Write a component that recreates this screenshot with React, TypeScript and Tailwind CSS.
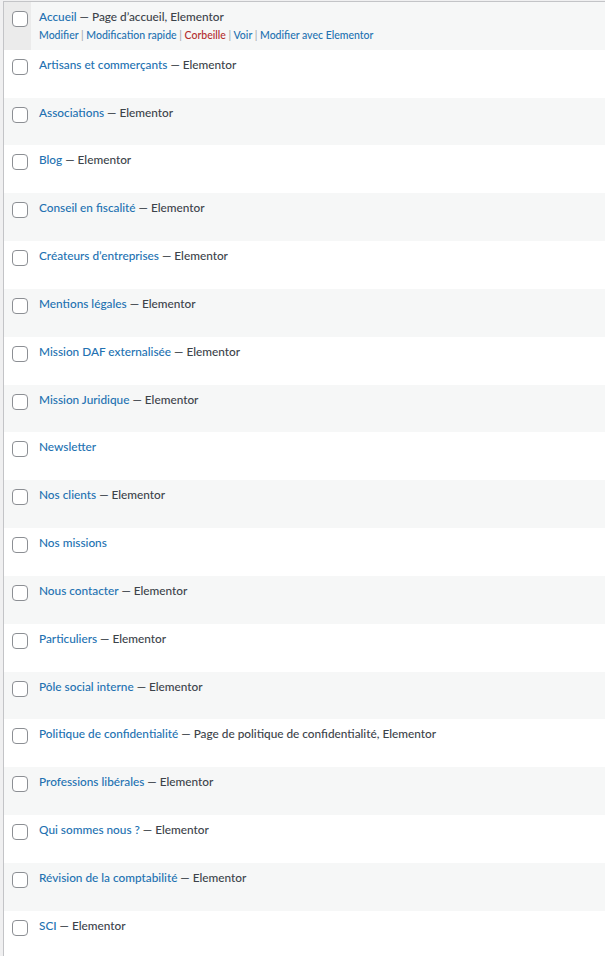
const pages: { title: string; state?: string }[] = [
  { title: "Accueil", state: "Page d’accueil, Elementor" },
  { title: "Artisans et commerçants", state: "Elementor" },
  { title: "Associations", state: "Elementor" },
  { title: "Blog", state: "Elementor" },
  { title: "Conseil en fiscalité", state: "Elementor" },
  { title: "Créateurs d’entreprises", state: "Elementor" },
  { title: "Mentions légales", state: "Elementor" },
  { title: "Mission DAF externalisée", state: "Elementor" },
  { title: "Mission Juridique", state: "Elementor" },
  { title: "Newsletter" },
  { title: "Nos clients", state: "Elementor" },
  { title: "Nos missions" },
  { title: "Nous contacter", state: "Elementor" },
  { title: "Particuliers", state: "Elementor" },
  { title: "Pôle social interne", state: "Elementor" },
  { title: "Politique de confidentialité", state: "Page de politique de confidentialité, Elementor" },
  { title: "Professions libérales", state: "Elementor" },
  { title: "Qui sommes nous ?", state: "Elementor" },
  { title: "Révision de la comptabilité", state: "Elementor" },
  { title: "SCI", state: "Elementor" },
];

function Sep() {
  return <span className="text-[#a7aaad]"> | </span>;
}

export default function App() {
  return (
    <div className="min-h-screen bg-[#f0f0f1] pl-[3px] pt-[1px] font-['Lato',sans-serif] text-[11.8px] font-medium text-[#3c434a]">
      <div className="border-l border-t border-[#c3c4c7] bg-white">
        {pages.map((p, i) => (
          <div
            key={p.title}
            className={`flex h-[47.84px] ${i % 2 === 0 ? "bg-[#f6f7f7]" : "bg-white"}`}
          >
            {/* checkbox column */}
            <div className={`w-[27px] shrink-0 pl-2 pt-[9px] ${i === 0 ? "bg-[#ebebeb]" : ""}`}>
              <div className="h-4 w-4 rounded-[4px] border border-[#8c8f94] bg-white" />
            </div>
            <div className="min-w-0 flex-1 pl-2 pt-[5px]">
              <div className="leading-[19px] whitespace-nowrap">
                <a className="text-[#2271b1]">{p.title}</a>
                {p.state && <span className="text-[#3c434a]"> — {p.state}</span>}
              </div>
              {i === 0 && (
                <div className="pt-[1px] text-[10.5px] leading-[17px] whitespace-nowrap text-[#2271b1]">
                  <a>Modifier</a>
                  <Sep />
                  <a>Modification rapide</a>
                  <Sep />
                  <a className="text-[#b32d2e]">Corbeille</a>
                  <Sep />
                  <a>Voir</a>
                  <Sep />
                  <a>Modifier avec Elementor</a>
                </div>
              )}
            </div>
          </div>
        ))}
      </div>
    </div>
  );
}
